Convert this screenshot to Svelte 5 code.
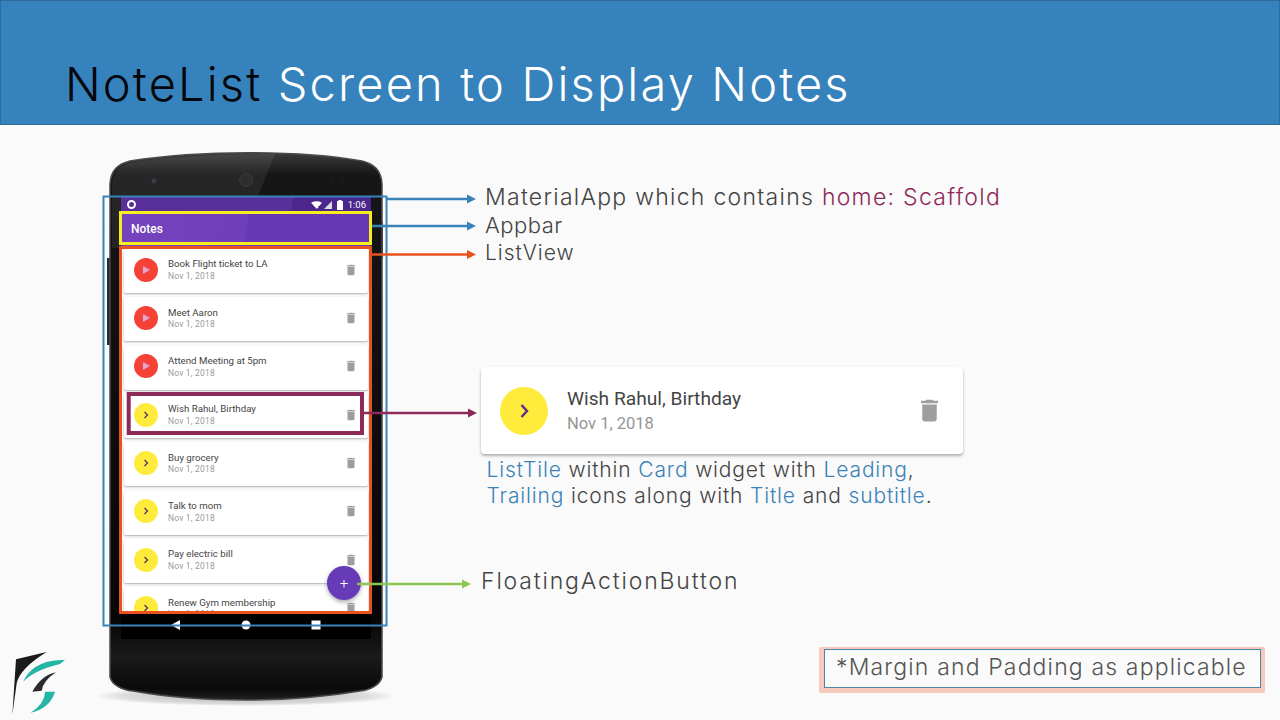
<script>
	const notes = [
		{ title: 'Book Flight ticket to LA', high: true },
		{ title: 'Meet Aaron', high: true },
		{ title: 'Attend Meeting at 5pm', high: true },
		{ title: 'Wish Rahul, Birthday', high: false },
		{ title: 'Buy grocery', high: false },
		{ title: 'Talk to mom', high: false },
		{ title: 'Pay electric bill', high: false },
		{ title: 'Renew Gym membership', high: false }
	];
	const trash = 'M6 19c0 1.1.9 2 2 2h8c1.1 0 2-.9 2-2V7H6v12zM19 4h-3.500l-1-1h-5l-1 1H5v2h14V4z';

	// annotation leaders: x1, x2, y, colour
	const arrows = [
		{ x1: 387, x2: 476, y: 199, c: '#3a83b8' },
		{ x1: 372, x2: 476, y: 226, c: '#3a83b8' },
		{ x1: 371, x2: 476, y: 254.500, c: '#e8521f' },
		{ x1: 362, x2: 477, y: 413, c: '#8e2a5a' },
		{ x1: 357, x2: 471, y: 584, c: '#8cc850' }
	];
</script>

<div class="slide">
	<header class="banner">
		<h1><span class="dark">NoteList</span> Screen to Display Notes</h1>
	</header>

	<div class="phone">
		<svg class="body" width="300" height="570" viewBox="0 0 300 570">
			<defs>
				<linearGradient id="shell" x1="0" y1="0" x2="0" y2="1">
					<stop offset="0" stop-color="#3c3c3e" />
					<stop offset="0.04" stop-color="#161617" />
					<stop offset="0.85" stop-color="#060606" />
					<stop offset="0.92" stop-color="#1a1a1a" />
					<stop offset="0.98" stop-color="#0a0a0a" />
					<stop offset="1" stop-color="#222" />
				</linearGradient>
				<radialGradient id="floor" cx="0.5" cy="0.5" r="0.5">
					<stop offset="0" stop-color="#000" stop-opacity="0.3" />
					<stop offset="0.8" stop-color="#000" stop-opacity="0.12" />
					<stop offset="1" stop-color="#000" stop-opacity="0" />
				</radialGradient>
			</defs>
			<ellipse cx="156" cy="546" rx="152" ry="10" fill="url(#floor)" />
			<rect x="17" y="108" width="4" height="87" fill="#2c2c2e" />
			<rect x="290" y="72" width="3" height="36" fill="#3a3a3c" />
			<path d="M20 34C21 20 28 14 40 11C110 0 210 0 272 11C284 14 291 20 292 34V527C290 535 280 540 270 541C200 553 110 553 43 541C32 540 22 535 20 527Z" fill="url(#shell)" stroke="#4a4a4c" stroke-width="1.500" />
			<path d="M42 12C90 6 135 4 185 4L147 98H22V34C23 21 30 15 42 12Z" fill="#fff" opacity="0.07" />
			<circle cx="64" cy="31" r="2.500" fill="#3c3c4c" />
			<circle cx="156" cy="30" r="6.500" fill="#2e2e2e" stroke="#3a3a3a" />
			<circle cx="243" cy="29" r="1.800" fill="#1c1c1c" />
			<circle cx="252" cy="29" r="1.800" fill="#1c1c1c" />
		</svg>

		<div class="screen">
			<div class="status">
				<span class="dot"></span>
				<span class="grow"></span>
				<svg width="11" height="8" viewBox="0 0 12 8"><path d="M0 1.500Q6-1.500 12 1.500L9 5H8V7L6 8Z" fill="#fff" /></svg>
				<svg width="8" height="8" viewBox="0 0 8 8"><path d="M8 0V8H0Z" fill="#ddd" /></svg>
				<svg class="batt" width="6" height="10" viewBox="0 0 6 10"><path d="M0 1H1.500V0H4.500V1H6V10H0Z" fill="#fff" /></svg>
				<span class="clock">1:06</span>
			</div>
			<div class="appbar">Notes</div>
			<div class="list">
				{#each notes as note}
					<div class="card">
						<div class="avatar" class:red={note.high}>
							{#if note.high}
								<svg width="10" height="10" viewBox="0 0 10 10"><path d="M2 1L9 5L2 9Z" fill="#e5a3cf" /></svg>
							{:else}
								<svg width="10" height="10" viewBox="0 0 10 10"><path d="M3.500 2L6.500 5L3.500 8" fill="none" stroke="#5b2c6f" stroke-width="1.300" /></svg>
							{/if}
						</div>
						<div class="copy">
							<div class="title">{note.title}</div>
							<div class="sub">Nov 1, 2018</div>
						</div>
						<svg class="bin" width="14" height="14" viewBox="0 0 24 24"><path d={trash} fill="#9e9e9e" /></svg>
					</div>
				{/each}
				<div class="fab">+</div>
			</div>
			<div class="nav">
				<svg width="10" height="10" viewBox="0 0 10 10"><path d="M9 0V10L0 5Z" fill="#fff" /></svg>
				<svg width="10" height="10" viewBox="0 0 10 10"><circle cx="5" cy="5" r="4.500" fill="#fff" /></svg>
				<svg width="10" height="10" viewBox="0 0 10 10"><rect x="0.500" y="0.500" width="9" height="9" fill="#fff" /></svg>
			</div>
		</div>
	</div>

	<svg class="overlay" width="1280" height="720" viewBox="0 0 1280 720">
		<rect x="103.500" y="196.500" width="283" height="429" fill="none" stroke="#3a83b8" stroke-width="2" />
		<rect x="120.500" y="212.500" width="250" height="31" fill="none" stroke="#f7ee1f" stroke-width="3" />
		<rect x="120.500" y="247.500" width="250" height="365" fill="none" stroke="#e8521f" stroke-width="3" />
		<rect x="128.700" y="394" width="233.300" height="39" fill="none" stroke="#8e2a5a" stroke-width="4" />
		{#each arrows as a}
			<line x1={a.x1} x2={a.x2 - 6} y1={a.y} y2={a.y} stroke={a.c} stroke-width="2.500" />
			<path d="M{a.x2 - 9} {a.y - 4.500}L{a.x2} {a.y}L{a.x2 - 9} {a.y + 4.500}Z" fill={a.c} />
		{/each}
	</svg>

	<p class="label app">MaterialApp which contains <span class="maroon">home: Scaffold</span></p>
	<p class="label bar">Appbar</p>
	<p class="label lv">ListView</p>
	<p class="label fabl">FloatingActionButton</p>

	<div class="detail">
		<div class="big-avatar">
			<svg width="20" height="20" viewBox="0 0 20 20"><path d="M7.500 4L13 10L7.500 16" fill="none" stroke="#5b2c8f" stroke-width="2.400" /></svg>
		</div>
		<div class="big-copy">
			<div class="big-title">Wish Rahul, Birthday</div>
			<div class="big-sub">Nov 1, 2018</div>
		</div>
		<svg class="big-bin" width="29" height="29" viewBox="0 0 24 24"><path d={trash} fill="#9e9e9e" /></svg>
	</div>

	<p class="caption">
		<span class="blue">ListTile</span> within <span class="blue">Card</span> widget with <span class="blue">Leading</span>,<br />
		<span class="blue">Trailing</span> icons along with <span class="blue">Title</span> and <span class="blue">subtitle</span>.
	</p>

	<div class="note"><div class="note-in">*Margin and Padding as applicable</div></div>

	<svg class="logo" width="80" height="80" viewBox="0 0 240 240">
		<path d="M140 36L48 58L37 225L50 130Q60 85 140 36Z" fill="#1d1a1c" />
		<path d="M195 60Q140 58 105 82Q80 100 70 125Q100 92 180 72Z" fill="#25b5a5" />
		<path d="M168 97Q125 105 97 155L125 152Q130 122 168 97Z" fill="#2c2a2c" />
		<path d="M165 155L135 155Q135 190 92 218Q150 205 165 155Z" fill="#25b5a5" />
	</svg>
</div>

<style>
	:global(body) { margin: 0; background: #fafafa; }
	.slide { position: relative; width: 1280px; height: 720px; overflow: hidden; background: #fafafa; font-family: Inter, "Liberation Sans", sans-serif; color: #444; }

	.banner { box-sizing: border-box; height: 125px; background: #3582bc; border: 1px solid #2c6b9b; display: flex; align-items: flex-end; padding: 0 0 10px 64px; }
	h1 { margin: 0; font-size: 47px; font-weight: 300; line-height: 60px; color: #fff; letter-spacing: 2.150px; }
	.dark { color: #05060a; }

	.phone { position: absolute; left: 90px; top: 150px; width: 300px; height: 570px; }
	.body { position: absolute; inset: 0; }
	.screen { position: absolute; left: 31px; top: 47px; width: 250px; height: 442px; display: flex; flex-direction: column; background: #000; font-family: Roboto, sans-serif; }

	.status { height: 15px; flex: none; background: linear-gradient(100deg, #59309a 0%, #59309a 68%, #4b268c 68.500%, #4b268c 100%); display: flex; align-items: center; gap: 2px; padding: 0 5px 0 6px; color: #fff; font-size: 9.500px; }
	.dot { box-sizing: border-box; width: 9px; height: 9px; border: 2.500px solid #fff; border-radius: 50%; }
	.grow { flex: 1; }
	.batt { margin-left: 3px; }
	.clock { margin-left: 3px; }

	.appbar { height: 34px; flex: none; box-sizing: border-box; background: linear-gradient(100deg, #7543bd 0%, #6f3fb9 50%, #6737b5 50.500%, #6737b5 100%); color: #fff; font-size: 12px; font-weight: 500; display: flex; align-items: center; padding-left: 10px; }

	.list { position: relative; height: 365px; flex: none; overflow: hidden; background: #fafafa; display: flex; flex-direction: column; gap: 4.350px; padding: 3px 3px 0; box-sizing: border-box; }
	.card { flex: none; height: 44px; box-sizing: border-box; background: #fff; border-radius: 2px; box-shadow: 0 1px 2px rgba(0,0,0,.3); display: flex; align-items: center; padding: 0 10px 3px 9.500px; }
	.avatar { width: 24px; height: 24px; flex: none; border-radius: 50%; background: #ffeb3b; display: flex; align-items: center; justify-content: center; }
	.avatar.red { background: #f44336; }
	.copy { flex: 1; margin-left: 10.500px; }
	.title { font-size: 9.700px; line-height: 13px; color: #444; }
	.sub { font-size: 8.500px; line-height: 11px; margin-top: 0.700px; color: #9a9a9a; letter-spacing: 0.2px; }

	.fab { position: absolute; left: 206px; top: 320px; width: 34px; height: 34px; border-radius: 50%; background: #673ab7; color: #fff; font-size: 15px; font-weight: 300; display: flex; align-items: center; justify-content: center; box-shadow: 0 2px 4px rgba(0,0,0,.35); }

	.nav { height: 28px; flex: none; display: flex; justify-content: space-between; align-items: center; padding: 0 50px; }

	.overlay { position: absolute; left: 0; top: 0; pointer-events: none; }

	.label { position: absolute; margin: 0; white-space: nowrap; font-weight: 300; line-height: 30px; letter-spacing: 0.500px; }
	.app { left: 485px; top: 182px; font-size: 23px; letter-spacing: 1.280px; }
	.bar { left: 485px; top: 210px; font-size: 22px; }
	.lv { left: 485px; top: 238px; font-size: 21px; letter-spacing: 1px; }
	.fabl { left: 481px; top: 566px; font-size: 23px; letter-spacing: 1.850px; }
	.maroon { color: #8e2a5a; }
	.blue { color: #3a83b8; }

	.detail { position: absolute; left: 481px; top: 367px; width: 482px; height: 87px; box-sizing: border-box; background: #fff; border-radius: 4px; box-shadow: 0 2px 3px rgba(0,0,0,.3); display: flex; align-items: center; padding: 0 19px 0 19px; }
	.big-avatar { width: 48px; height: 48px; flex: none; border-radius: 50%; background: #ffeb3b; display: flex; align-items: center; justify-content: center; }
	.big-copy { flex: 1; margin-left: 19px; padding-top: 1px; font-family: Roboto, sans-serif; }
	.big-title { font-size: 19.200px; line-height: 25px; color: #444; }
	.big-sub { font-size: 16.500px; line-height: 25px; color: #959595; }
	.big-bin { flex: none; }

	.caption { position: absolute; left: 486.500px; top: 457px; margin: 0; font-size: 21px; font-weight: 300; line-height: 26px; letter-spacing: 0.850px; white-space: nowrap; }

	.note { position: absolute; left: 819px; top: 647px; width: 446px; height: 45.500px; box-sizing: border-box; border: solid #f6c9bd; border-width: 2px 4px 5px 5px; border-radius: 2px; }
	.note-in { box-sizing: border-box; height: 100%; border: 1px solid #4a86a8; padding-left: 11px; font-size: 23px; font-weight: 300; line-height: 35px; letter-spacing: 1.150px; white-space: nowrap; color: #555; }

	.logo { position: absolute; left: 0; top: 640px; }
</style>
